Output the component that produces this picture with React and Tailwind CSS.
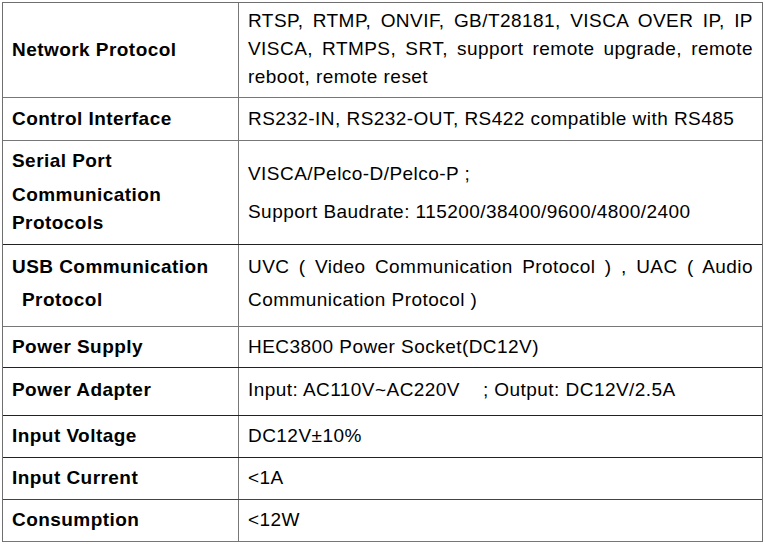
export default function App() {
  const font = {
    fontFamily: '"Liberation Sans", Arial, "Noto Sans CJK SC", sans-serif',
  };
  const J = "text-justify [text-align-last:justify]";
  return (
    <div className="w-[765px] h-[544px] bg-white text-black" style={font}>
      <div className="ml-[2px] pt-[2px]">
        <div className="w-[761px] border-t border-l border-r border-[#6f6f6f] text-[19px] tracking-[0.45px]">
          {/* Row 1 */}
          <div className="flex h-[95px] border-b border-[#777]">
            <div className="w-[236px] border-r border-[#777] flex items-center pl-[9px] font-bold">
              Network Protocol
            </div>
            <div className="flex-1 pl-[9px] pr-[9px] pt-[4px] leading-[28px]">
              <div className={J}>RTSP, RTMP, ONVIF, GB/T28181, VISCA OVER IP, IP</div>
              <div className={J}>VISCA, RTMPS, SRT, support remote upgrade, remote</div>
              <div>reboot, remote reset</div>
            </div>
          </div>
          {/* Row 2 */}
          <div className="flex h-[43px] border-b border-[#777]">
            <div className="w-[236px] border-r border-[#777] flex items-center pl-[9px] font-bold">
              Control Interface
            </div>
            <div className="flex-1 flex items-center pl-[9px]">
              RS232-IN, RS232-OUT, RS422 compatible with RS485
            </div>
          </div>
          {/* Row 3 */}
          <div className="flex h-[104px] border-b border-[#222]">
            <div className="w-[236px] border-r border-[#777] pl-[9px] pt-[6px] font-bold leading-[28px]">
              <div>Serial Port</div>
              <div className="mt-[6px]">Communication</div>
              <div>Protocols</div>
            </div>
            <div className="flex-1 flex flex-col justify-center gap-[10px] pl-[9px] leading-[28px]">
              <div className="whitespace-pre">{"VISCA/Pelco-D/Pelco-P ;"}</div>
              <div>Support Baudrate: 115200/38400/9600/4800/2400</div>
            </div>
          </div>
          {/* Row 4 */}
          <div className="flex h-[82px] border-b border-[#777]">
            <div className="w-[236px] border-r border-[#777] pl-[9px] pt-[5px] font-bold leading-[33px]">
              <div>USB Communication</div>
              <div className="pl-[10px]">Protocol</div>
            </div>
            <div className="flex-1 pl-[9px] pr-[9px] pt-[5px] leading-[33px]">
              <div className={J}>UVC ( Video Communication Protocol ) , UAC ( Audio</div>
              <div>Communication Protocol )</div>
            </div>
          </div>
          {/* Row 5 */}
          <div className="flex h-[41px] border-b border-[#222]">
            <div className="w-[236px] border-r border-[#777] flex items-center pl-[9px] font-bold">
              Power Supply
            </div>
            <div className="flex-1 flex items-center pl-[9px]">
              HEC3800 Power Socket(DC12V)
            </div>
          </div>
          {/* Row 6 */}
          <div className="flex h-[48px] border-b border-[#222]">
            <div className="w-[236px] border-r border-[#777] flex items-center pl-[9px] pb-[3px] font-bold">
              Power Adapter
            </div>
            <div className="flex-1 flex items-center pl-[9px] pb-[3px] whitespace-pre">
              {"Input: AC110V~AC220V    ; Output: DC12V/2.5A"}
            </div>
          </div>
          {/* Row 7 */}
          <div className="flex h-[42px] border-b border-[#222]">
            <div className="w-[236px] border-r border-[#777] flex items-center pl-[9px] font-bold">
              Input Voltage
            </div>
            <div className="flex-1 flex items-center pl-[9px]">DC12V±10%</div>
          </div>
          {/* Row 8 */}
          <div className="flex h-[42px] border-b border-[#444]">
            <div className="w-[236px] border-r border-[#777] flex items-center pl-[9px] font-bold">
              Input Current
            </div>
            <div className="flex-1 flex items-center pl-[9px]">&lt;1A</div>
          </div>
          {/* Row 9 */}
          <div className="flex h-[42px] border-b border-[#777]">
            <div className="w-[236px] border-r border-[#777] flex items-center pl-[9px] font-bold">
              Consumption
            </div>
            <div className="flex-1 flex items-center pl-[9px]">&lt;12W</div>
          </div>
        </div>
      </div>
    </div>
  );
}
